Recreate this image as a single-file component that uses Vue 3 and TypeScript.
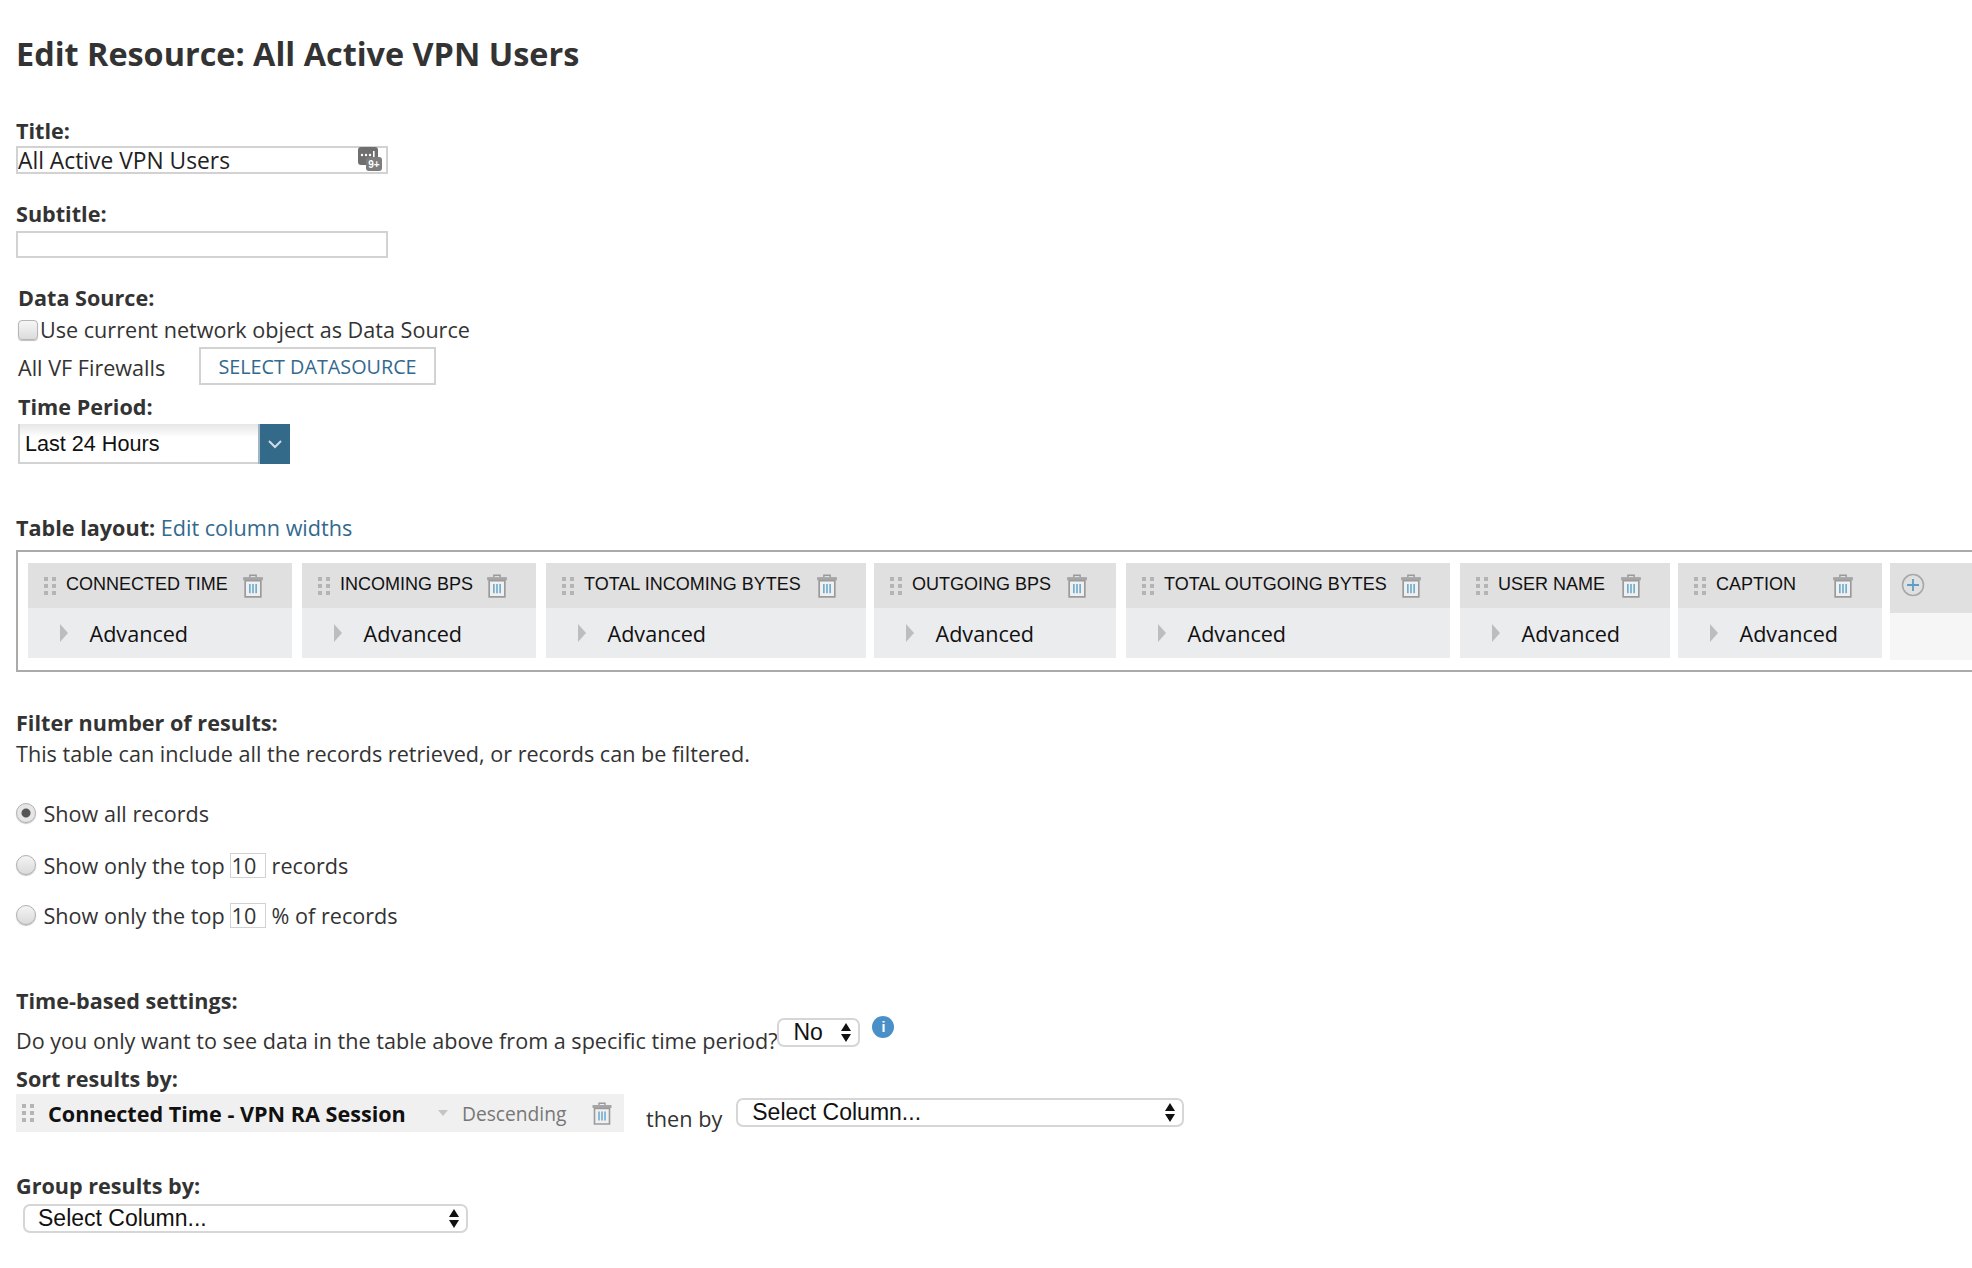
<script setup lang="ts">
import { ref } from 'vue'

interface Col {
  name: string
  width: number
  gap: number
}

const columns: Col[] = [
  { name: 'CONNECTED TIME', width: 264, gap: 10 },
  { name: 'INCOMING BPS', width: 234, gap: 10 },
  { name: 'TOTAL INCOMING BYTES', width: 320, gap: 8 },
  { name: 'OUTGOING BPS', width: 242, gap: 10 },
  { name: 'TOTAL OUTGOING BYTES', width: 324, gap: 10 },
  { name: 'USER NAME', width: 210, gap: 8 },
  { name: 'CAPTION', width: 204, gap: 8 }
]

const title = ref('All Active VPN Users')
const subtitle = ref('')
const useCurrent = ref(false)
const mode = ref('all')
const topCount = ref('10')
const topPercent = ref('10')
</script>

<template>
  <div class="page">
    <h1>Edit Resource: All Active VPN Users</h1>

    <div class="label first">Title:</div>
    <div class="text-wrap">
      <input v-model="title" class="text-input title-input" type="text" />
      <svg class="macro" width="24" height="24" viewBox="0 0 24 24">
        <rect x="0" y="0" width="20" height="18" rx="3" fill="#6f6f6f" />
        <circle cx="4" cy="8" r="1.2" fill="#fff" />
        <circle cx="8" cy="8" r="1.2" fill="#fff" />
        <circle cx="12" cy="8" r="1.2" fill="#fff" />
        <rect x="15" y="4" width="1.6" height="6" fill="#fff" />
        <rect x="8" y="10" width="16" height="14" rx="3" fill="#7d7d7d" />
        <text x="16" y="21" font-size="10" font-weight="700" fill="#fff" text-anchor="middle" font-family="Liberation Sans, sans-serif">9+</text>
      </svg>
    </div>

    <div class="label sub">Subtitle:</div>
    <input v-model="subtitle" class="text-input subtitle" type="text" />

    <div class="label data">Data Source:</div>
    <label class="check-row">
      <input v-model="useCurrent" class="check" type="checkbox" />
      <span>Use current network object as Data Source</span>
    </label>
    <div class="source-row">
      <span class="source-name">All VF Firewalls</span>
      <button class="source-btn">SELECT DATASOURCE</button>
    </div>
    <div class="label period">Time Period:</div>
    <div class="period-select">
      <span class="period-value">Last 24 Hours</span>
      <span class="period-arrow">
        <svg width="16" height="10" viewBox="0 0 16 10">
          <path d="M2 2l6 6 6-6" fill="none" stroke="#cfdde6" stroke-width="2" />
        </svg>
      </span>
    </div>

    <div class="label layout-label">Table layout: <a class="link">Edit column widths</a></div>
    <div class="table-box">
      <div
        v-for="col in columns"
        :key="col.name"
        class="col"
        :style="{ width: col.width + 'px', marginRight: col.gap + 'px' }"
      >
        <div class="col-head">
          <span class="grip"><i></i><i></i><i></i><i></i><i></i><i></i></span>
          <span class="col-name">{{ col.name }}</span>
          <svg class="trash" width="22" height="24" viewBox="0 0 20 23">
            <path d="M7 3V1.2h6V3" fill="none" stroke="#9a9a9a" stroke-width="1.4" />
            <rect x="0.5" y="3" width="19" height="3" fill="#a5a5a5" />
            <path d="M2.5 6.5h15V22h-15z" fill="#f0f0f0" stroke="#9a9a9a" stroke-width="1.6" />
            <path d="M7 9.5v9M10 9.5v9M13 9.5v9" stroke="#5fa3cc" stroke-width="1.4" />
          </svg>
        </div>
        <div class="col-body">
          <span class="caret"></span>
          <span>Advanced</span>
        </div>
      </div>
      <div class="col add">
        <div class="add-head">
          <svg width="24" height="24" viewBox="0 0 24 24">
            <circle cx="12" cy="12" r="10.5" fill="none" stroke="#a8a8a8" stroke-width="1.6" />
            <path d="M12 6v12M6 12h12" stroke="#5c9ec6" stroke-width="1.8" />
          </svg>
        </div>
        <div class="add-body"></div>
      </div>
    </div>

    <div class="label filter">Filter number of results:</div>
    <div class="line desc">This table can include all the records retrieved, or records can be filtered.</div>

    <label class="line radio-row r1">
      <input v-model="mode" class="radio" type="radio" value="all" />
      <span>Show all records</span>
    </label>
    <label class="line radio-row r2">
      <input v-model="mode" class="radio" type="radio" value="top" />
      <span>Show only the top</span>
      <input v-model="topCount" class="mini" type="text" />
      <span>records</span>
    </label>
    <label class="line radio-row r3">
      <input v-model="mode" class="radio" type="radio" value="pct" />
      <span>Show only the top</span>
      <input v-model="topPercent" class="mini" type="text" />
      <span>% of records</span>
    </label>

    <div class="label timebased">Time-based settings:</div>
    <div class="line question">
      <span>Do you only want to see data in the table above from a specific time period?</span>
      <span class="sel sel-no">No<span class="updown"></span></span>
      <span class="info">i</span>
    </div>

    <div class="label sort">Sort results by:</div>
    <div class="sort-row">
      <div class="sort-chip">
        <span class="grip small"><i></i><i></i><i></i><i></i><i></i><i></i></span>
        <b class="sort-name">Connected Time - VPN RA Session</b>
        <span class="sort-caret"></span>
        <span class="sort-dir">Descending</span>
        <svg class="sort-trash" width="20" height="23" viewBox="0 0 20 23">
          <path d="M7 3V1.2h6V3" fill="none" stroke="#9a9a9a" stroke-width="1.4" />
          <rect x="0.5" y="3" width="19" height="3" fill="#a5a5a5" />
          <path d="M2.5 6.5h15V22h-15z" fill="#f0f0f0" stroke="#9a9a9a" stroke-width="1.6" />
          <path d="M7 9.5v9M10 9.5v9M13 9.5v9" stroke="#5fa3cc" stroke-width="1.4" />
        </svg>
      </div>
      <span class="then">then by</span>
      <span class="sel sel-then">Select Column...<span class="updown"></span></span>
    </div>

    <div class="label group">Group results by:</div>
    <span class="sel sel-group">Select Column...<span class="updown"></span></span>
  </div>
</template>

<style>
html,
body {
  margin: 0;
  background: #fff;
  overflow: hidden;
}
</style>

<style scoped>
.page {
  width: 1972px;
  height: 1268px;
  overflow: hidden;
  box-sizing: border-box;
  padding: 31px 0 0 16px;
  font-family: "Open Sans", sans-serif;
  font-size: 21.6px;
  color: #333;
}

h1 {
  margin: 0;
  font-size: 32.4px;
  line-height: 44px;
  font-weight: 700;
}

.label {
  font-weight: 700;
  line-height: 24px;
  height: 24px;
}
.first { margin-top: 44px; }
.sub { margin-top: 28px; }
.data { margin-top: 28px; margin-left: 2px; }
.period { margin-top: 10px; margin-left: 2px; }
.layout-label { margin-top: 52px; }
.filter { margin-top: 39px; }
.timebased { margin-top: 62px; }
.sort { margin-top: 15px; }
.group { margin-top: 42px; }

.link {
  font-weight: 400;
  color: #33698e;
}

.text-wrap {
  position: relative;
  width: 372px;
  margin-top: 3px;
}
.text-input {
  display: block;
  box-sizing: border-box;
  width: 372px;
  height: 28px;
  margin: 0;
  padding: 0 1px;
  border: 2px solid #d2d2d2;
  outline: none;
  font: 20px "Open Sans", sans-serif;
  color: #222;
}
.title-input {
  font-size: 22.8px;
  padding: 0;
}
.subtitle {
  margin-top: 5px;
  height: 27px;
}
.macro {
  position: absolute;
  right: 6px;
  top: 1px;
}

.check-row {
  display: flex;
  align-items: center;
  height: 24px;
  margin: 8px 0 0 2px;
  line-height: 22px;
}
.check {
  appearance: none;
  box-sizing: border-box;
  width: 20px;
  height: 20px;
  margin: 0 2px 0 0;
  border: 1px solid #b5b5b5;
  border-radius: 4px;
  background: linear-gradient(#f6f6f6, #dcdcdc);
  box-shadow: 0 1px 1px rgba(0, 0, 0, 0.25);
}

.source-row {
  display: flex;
  align-items: center;
  height: 38px;
  margin: 5px 0 0 2px;
}
.source-name {
  width: 181px;
  padding-top: 2px;
}
.source-btn {
  box-sizing: border-box;
  width: 237px;
  height: 38px;
  padding: 0;
  border: 2px solid #d2d2d2;
  background: #fff;
  color: #33698e;
  font: 19.8px "Open Sans", sans-serif;
}

.period-select {
  display: flex;
  align-items: stretch;
  box-sizing: border-box;
  width: 272px;
  height: 40px;
  margin: 5px 0 0 2px;
  border-bottom: 2px solid #d2d2d2;
  border-left: 2px solid #d2d2d2;
  background: linear-gradient(#e6e6e6, #fff 35%);
}
.period-value {
  flex: 1;
  padding-left: 5px;
  font: 21.6px/40px "Liberation Sans", sans-serif;
  color: #111;
}
.period-arrow {
  display: flex;
  align-items: center;
  justify-content: center;
  width: 30px;
  margin-bottom: -2px;
  background: #336a8a;
  border-left: 2px solid #9fb6c5;
}

.table-box {
  display: flex;
  box-sizing: border-box;
  width: 2100px;
  height: 122px;
  margin-top: 10px;
  padding: 11px 10px;
  border: 2px solid #aaa;
}
.col {
  flex: none;
}
.col-head {
  display: flex;
  align-items: center;
  height: 45px;
  padding-left: 16px;
  background: #e0e0e0;
  font: 18px "Liberation Sans", sans-serif;
  color: #111;
}
.col-name {
  flex: 1;
  padding-bottom: 2px;
  white-space: nowrap;
}
.trash {
  margin-right: 28px;
}
.grip {
  display: grid;
  grid-template-columns: 4px 4px;
  gap: 3px 4px;
  margin-right: 10px;
}
.grip i {
  width: 4px;
  height: 4px;
  background: #b4b4b4;
}
.col-body {
  display: flex;
  align-items: center;
  height: 50px;
  padding-left: 32px;
  background: #ebecee;
  color: #111;
}
.caret {
  width: 0;
  height: 0;
  margin-right: 21.5px;
  border-left: 8px solid #bdbdbd;
  border-top: 9px solid transparent;
  border-bottom: 9px solid transparent;
}
.add {
  width: 200px;
}
.add-head {
  box-sizing: border-box;
  height: 50px;
  padding: 10px 0 0 11px;
  background: #e0e0e0;
}
.add-body {
  height: 47px;
  background: #f6f6f6;
}

.line {
  display: flex;
  align-items: center;
  height: 24px;
}
.desc { margin-top: 6px; }
.radio-row { gap: 5px; }
.r1 { margin-top: 36px; }
.r2 { margin-top: 28px; }
.r3 { margin-top: 26px; }
.radio {
  appearance: none;
  box-sizing: border-box;
  width: 20px;
  height: 20px;
  margin: 0 2.5px 0 0;
  border: 1px solid #b0b0b0;
  border-radius: 50%;
  background: linear-gradient(#f4f4f4, #dadada);
  box-shadow: 0 1px 1px rgba(0, 0, 0, 0.25);
}
.radio:checked {
  background: radial-gradient(circle, #555 0 4px, #e6e6e6 5px);
}
.mini {
  box-sizing: border-box;
  width: 36px;
  height: 25px;
  margin: 0 1px 0 0;
  padding: 0 1px;
  border: 1px solid #d2d2d2;
  outline: none;
  font: 21.6px "Open Sans", sans-serif;
  color: #333;
}

.question {
  margin-top: 15px;
}
.sel {
  position: relative;
  display: inline-block;
  box-sizing: border-box;
  height: 29px;
  border: 2px solid #d6d6d6;
  border-radius: 7px;
  background: #fff;
  font: 23px/25px "Liberation Sans", sans-serif;
  color: #111;
}
.updown {
  position: absolute;
  right: 7px;
  top: 3px;
  width: 0;
  height: 0;
  border-left: 5px solid transparent;
  border-right: 5px solid transparent;
  border-bottom: 8px solid #111;
}
.updown::after {
  content: "";
  position: absolute;
  left: -5px;
  top: 11px;
  width: 0;
  height: 0;
  border-left: 5px solid transparent;
  border-right: 5px solid transparent;
  border-top: 8px solid #111;
}
.sel-no {
  width: 83px;
  padding-left: 14px;
  margin-top: -16px;
}
.info {
  width: 22px;
  height: 22px;
  margin: -26px 0 0 12px;
  border-radius: 50%;
  background: #4a90c8;
  color: #fff;
  font: 700 14px/22px "Liberation Sans", sans-serif;
  text-align: center;
}

.sort-row {
  display: flex;
  align-items: flex-start;
  margin-top: 3px;
}
.sort-chip {
  display: flex;
  align-items: center;
  box-sizing: border-box;
  width: 608px;
  height: 38px;
  padding-left: 6px;
  background: #f0f0f0;
}
.small {
  margin-right: 14px;
}
.sort-name {
  width: 390px;
  color: #111;
  font-size: 21.6px;
  white-space: nowrap;
}
.sort-caret {
  width: 0;
  height: 0;
  margin-right: 14px;
  border-left: 5px solid transparent;
  border-right: 5px solid transparent;
  border-top: 6px solid #c4c4c4;
}
.sort-dir {
  width: 130px;
  color: #777;
  font-size: 19.2px;
}
.then {
  margin: 13px 14px 0 22px;
  font-size: 21.7px;
  line-height: 24px;
}
.sel-then {
  width: 448px;
  margin-top: 4px;
  padding-left: 14px;
}
.sel-group {
  display: block;
  width: 445px;
  margin: 6px 0 0 7px;
  padding-left: 13px;
}
</style>
